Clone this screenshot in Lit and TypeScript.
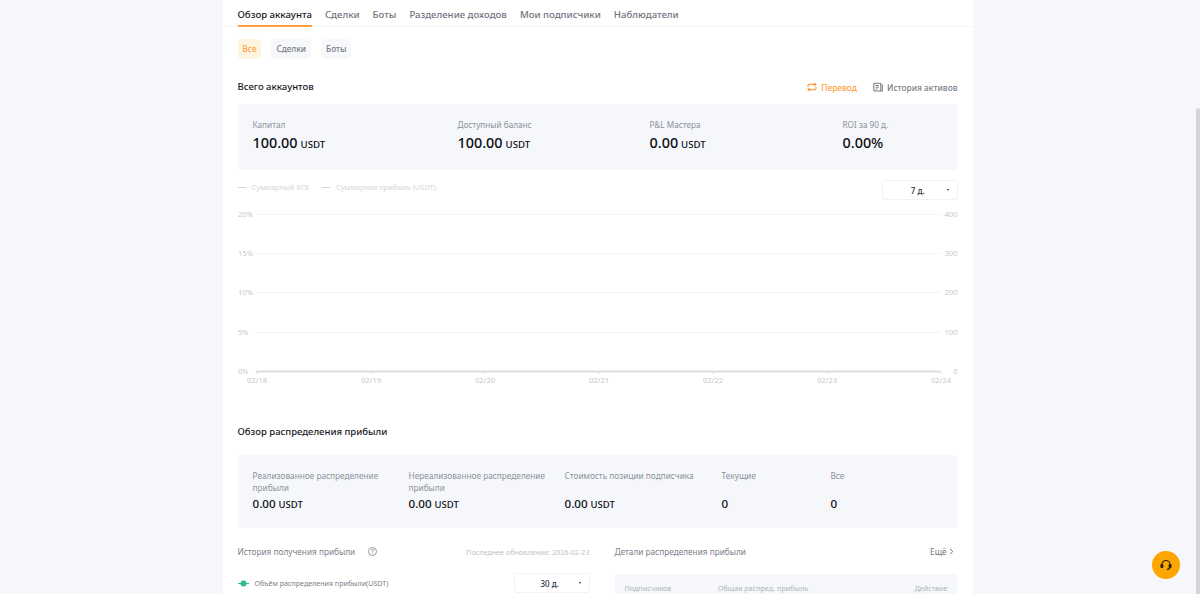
import { LitElement, html, css, svg } from "lit";
import { customElement } from "lit/decorators.js";

const Y = [
  ["20%", "400", 10],
  ["15%", "300", 49],
  ["10%", "200", 88],
  ["5%", "100", 128],
  ["0%", "0", 167],
] as const;
const X = ["02/18", "02/19", "02/20", "02/21", "02/22", "02/23", "02/24"];

@customElement("app-root")
export class AppRoot extends LitElement {
  static styles = css`
    :host {
      display: block;
      height: 594px;
      overflow: hidden;
      background: #f5f7fb;
      font-family: "Noto Sans", sans-serif;
      color: #0c0e12;
      position: relative;
    }
    .page { width: 1195px; display: flex; justify-content: flex-start; }
    .panel { margin-left: 222.5px; width: 750px; height: 594px; background: #fff; overflow: hidden; box-sizing: border-box; }
    .tabs { height: 27px; display: flex; gap: 13px; padding-left: 15px; border-bottom: 1px solid #f5f6f8; box-sizing: border-box; }
    .tab { font-size: 9.6px; font-weight: 500; line-height: 15px; padding-top: 7px; color: #6f7480; height: 27px; box-sizing: border-box; white-space: nowrap; }
    .tab.on { color: #16181d; border-bottom: 2px solid #ff9f3c; }
    .body { padding: 0 15px; }
    .chips { display: flex; gap: 10px; margin-top: 12px; height: 20px; }
    .chip { font-size: 8.2px; font-weight: 500; line-height: 20px; padding: 0 5px; border-radius: 4px; background: #f7f8fa; color: #767b86; }
    .chip.on { background: #fff3e2; color: #ff9f3c; }
    .head { display: flex; justify-content: space-between; align-items: center; margin-top: 20px; height: 16px; }
    .title { font-size: 9.5px; font-weight: 500; line-height: 16px; color: #16181d; }
    .actions { display: flex; gap: 16px; font-size: 8.4px; font-weight: 500; color: #7b808b; }
    .action { display: flex; align-items: center; gap: 4px; }
    .action.orange { color: #ff9f3c; }
    .card { background: #f5f7fb; border-radius: 4px; display: grid; box-sizing: border-box; padding: 0 15px; }
    .c1 { margin-top: 9px; height: 66px; grid-template-columns: 205px 192px 193px 1fr; padding-top: 14px; }
    .lab { font-size: 8.2px; line-height: 13px; color: #8d929c; }
    .val { font-size: 14.4px; line-height: 20px; margin-top: 2px; color: #0c0e12; font-weight: 500; }
    .val small { font-size: 9.6px; font-weight: 500; margin-left: 3px; }
    .legendrow { display: flex; justify-content: space-between; align-items: flex-start; margin-top: 10px; height: 24px; }
    .legend { display: flex; gap: 13px; font-size: 7.35px; line-height: 15px; color: #d4d6db; }
    .legend span { display: flex; align-items: center; gap: 6px; }
    .legend i { width: 8px; height: 1px; background: #d4d6db; display: block; }
    .select { width: 75.5px; height: 20px; box-sizing: border-box; border: 1px solid #f2f3f5; border-radius: 3px; display: flex; align-items: center; font-size: 8px; font-weight: 500; color: #2b2e35; position: relative; justify-content: center; padding-right: 4px; background: #fff; }
    .select::after { content: ""; position: absolute; right: 8px; top: 8px; border: 1.5px solid transparent; border-top: 2px solid #2b2e35; }
    svg.chart { display: block; width: 720px; height: 200px; }
    svg.chart text { font-family: "Noto Sans", sans-serif; font-size: 7.6px; fill: #c4c7cd; }
    .h2 { margin-top: 20px; }
    .c2 { margin-top: 15px; height: 73px; grid-template-columns: 156px 156px 157px 109px 1fr; padding-top: 15px; }
    .c2 .lab { font-size: 8.25px; line-height: 11.5px; height: 23px; }
    .c2 .val { font-size: 11.6px; line-height: 17px; margin-top: 2px; }
    .c2 .val small { font-size: 9.5px; margin-left: 3px; }
    .cols { display: grid; grid-template-columns: 352px 342px; column-gap: 25px; margin-top: 15px; }
    .ch { display: flex; align-items: center; height: 16px; font-size: 8.25px; color: #7b808b; }
    .ch .q { margin-left: 13px; display: block; }
    .ch .upd { margin-left: auto; font-size: 7.2px; color: #c0c3c9; padding-top: 2px; }
    .ch .more { margin-left: auto; font-size: 8.2px; color: #6f7480; padding-right: 3px; display: flex; align-items: center; gap: 2px; }
    .rowl { display: flex; align-items: center; justify-content: space-between; margin-top: 14px; height: 20px; }
    .serie { display: flex; align-items: center; gap: 6px; font-size: 7.1px; color: #7b808b; }
    .thead { margin-top: 15px; height: 30px; background: #f5f7fb; border-radius: 4px 4px 0 0; display: flex; font-size: 7.2px; line-height: 10px; color: #b1b4bb; padding: 9px 9px 0 10px; box-sizing: border-box; }
    .thead span:nth-child(1) { width: 93.5px; }
    .thead span:nth-child(3) { margin-left: auto; }
    .bar { position: absolute; right: 0; top: 0; width: 5px; height: 594px; background: #f8f8f8; }
    .bar i { position: absolute; left: 1px; top: 108px; bottom: 0; width: 4px; background: #d6d6d6; border-radius: 2px 2px 0 0; display: block; }
    .help { position: absolute; left: 1152px; top: 551px; width: 28px; height: 28px; border-radius: 50%; background: #ffa500; display: flex; align-items: center; justify-content: center; }
  `;

  chart() {
    return html`<svg class="chart" viewBox="0 0 720 200">
      ${Y.map(([l, r, y]) => svg`
        <text x="0" y=${y + 3} font-size="8">${l}</text>
        <line x1="18" x2="702" y1=${y + .5} y2=${y + .5} stroke=${y === 167 ? "#dcdde3" : "#f3f4f7"} stroke-width=${y === 167 ? 2 : 1}></line>
        <text x="719.500" y=${y + 3} text-anchor="end">${r}</text>`)}
      ${X.map((t, i) => {
        const x = 19 + i * 114;
        return svg`<line x1=${x} x2=${x} y1="167" y2="170" stroke="#dcdde3"></line>
          <text x=${x} y="179" text-anchor="middle">${t}</text>`;
      })}
    </svg>`;
  }

  render() {
    return html`
      <div class="page"><div class="panel">
        <div class="tabs">
          <div class="tab on">Обзор аккаунта</div>
          <div class="tab">Сделки</div>
          <div class="tab">Боты</div>
          <div class="tab">Разделение доходов</div>
          <div class="tab">Мои подписчики</div>
          <div class="tab">Наблюдатели</div>
        </div>
        <div class="body">
          <div class="chips">
            <div class="chip on">Все</div><div class="chip">Сделки</div><div class="chip">Боты</div>
          </div>
          <div class="head">
            <div class="title">Всего аккаунтов</div>
            <div class="actions">
              <div class="action orange">
                <svg width="10" height="10" viewBox="0 0 10 10" fill="none" stroke="#ff9f3c" stroke-width="1.1"><path d="M1 5V3.4c0-.6.4-1 1-1h7M7.4.8 9 2.4 7.4 4M9 5v1.6c0 .6-.4 1-1 1H1M2.6 5.9 1 7.600 2.600 9.200"/></svg>
                Перевод
              </div>
              <div class="action">
                <svg width="10" height="10" viewBox="0 0 10 10" fill="none" stroke="#7b808b" stroke-width="1.1"><rect x=".8" y="1.200" width="7" height="7.800" rx=".8"/><path d="M7.800 3H9.300V9H7.800M2.500 3.500H5.800M2.500 5.300H5.800M2.500 7H4.500"/></svg>
                История активов
              </div>
            </div>
          </div>
          <div class="card c1">
            <div><div class="lab">Капитал</div><div class="val">100.00<small>USDT</small></div></div>
            <div><div class="lab">Доступный баланс</div><div class="val">100.00<small>USDT</small></div></div>
            <div><div class="lab">P&amp;L Мастера</div><div class="val">0.00<small>USDT</small></div></div>
            <div><div class="lab">ROI за 90 д.</div><div class="val">0.00%</div></div>
          </div>
          <div class="legendrow">
            <div class="legend"><span><i></i>Суммарный ROI</span><span><i></i>Суммарная прибыль (USDT)</span></div>
            <div class="select">7 д.</div>
          </div>
          ${this.chart()}
          <div class="title h2">Обзор распределения прибыли</div>
          <div class="card c2">
            <div><div class="lab">Реализованное распределение прибыли</div><div class="val">0.00<small>USDT</small></div></div>
            <div><div class="lab">Нереализованное распределение прибыли</div><div class="val">0.00<small>USDT</small></div></div>
            <div><div class="lab">Стоимость позиции подписчика</div><div class="val">0.00<small>USDT</small></div></div>
            <div><div class="lab">Текущие</div><div class="val">0</div></div>
            <div><div class="lab">Все</div><div class="val">0</div></div>
          </div>
          <div class="cols">
            <div>
              <div class="ch">История получения прибыли
                <svg class="q" width="9" height="9" viewBox="0 0 9 9" fill="none" stroke="#7b808b" stroke-width=".8"><circle cx="4.500" cy="4.500" r="4"/><path d="M3.300 3.500a1.200 1.200 0 1 1 1.800 1c-.4.300-.6.400-.6.900M4.500 6.300v.6"/></svg>
                <span class="upd">Последнее обновление: 2026-02-23</span>
              </div>
              <div class="rowl">
                <div class="serie">
                  <svg width="11" height="7" viewBox="0 0 11 7"><path d="M0 3.500H11" stroke="#2fbd85"/><circle cx="5.500" cy="3.500" r="3" fill="#2fbd85"/></svg>
                  Объём распределения прибыли(USDT)
                </div>
                <div class="select">30 д.</div>
              </div>
            </div>
            <div>
              <div class="ch">Детали распределения прибыли
                <span class="more">Ещё <svg width="5" height="7" viewBox="0 0 5 7" fill="none" stroke="#6f7480"><path d="M1 .8 3.800 3.500 1 6.200"/></svg></span>
              </div>
              <div class="thead"><span>Подписчиков</span><span>Общая распред. прибыль</span><span>Действие</span></div>
            </div>
          </div>
        </div>
      </div></div>
      <div class="bar"><i></i></div>
      <div class="help">
        <svg width="12" height="12" viewBox="0 0 12 12" fill="none" stroke="#2b2107" stroke-width="1.200"><path d="M2 7V5.500a4 4 0 0 1 8 0V7M10 8c0 1.500-1.200 2.300-3 2.300"/><rect x="1" y="5.500" width="1.800" height="3" rx=".8" fill="#2b2107"/><rect x="9.200" y="5.500" width="1.800" height="3" rx=".8" fill="#2b2107"/></svg>
      </div>
    `;
  }
}
